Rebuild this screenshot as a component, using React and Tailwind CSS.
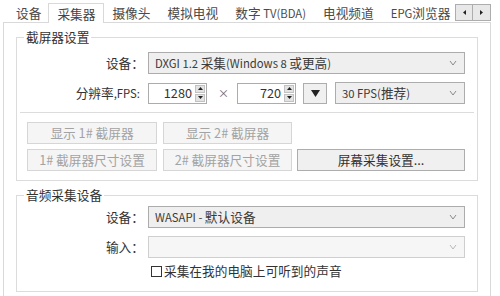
import React from "react";

function Mixed({ text }) {
  const parts = String(text).split(/([\x20-\x7E]+)/);
  return parts.map((p, i) =>
    /[\x20-\x7E]/.test(p) ? (
      <span key={i} className="text-[11.3px]">
        {p}
      </span>
    ) : (
      <React.Fragment key={i}>{p}</React.Fragment>
    )
  );
}

function Chevron({ light }) {
  return (
    <svg width="8" height="6" viewBox="0 0 8 6" className="shrink-0">
      <polyline points="1,1 4,5 7,1" fill="none" stroke={light ? "#b8b8b8" : "#8a8a8a"} strokeWidth="1" />
    </svg>
  );
}

function Dropdown({ text, className = "", disabled }) {
  return (
    <div
      className={
        "flex items-center h-[22px] border pl-[6px] pr-[7px] " +
        (disabled ? "border-[#cfcfcf] bg-[#f6f6f6] " : "border-[#acacac] bg-[#efefef] ") +
        className
      }
    >
      <span className="flex-1 whitespace-nowrap text-[#3a3a3a]">
        <Mixed text={text} />
      </span>
      <Chevron light={disabled} />
    </div>
  );
}

function Spin({ value }) {
  return (
    <div className="flex items-center h-[21px] w-[59px] border border-[#acacac] bg-white pr-[1px]">
      <span className="flex-1 text-right pr-[3px] text-[#333]">{value}</span>
      <div className="flex flex-col gap-[1px] w-[10px]">
        <div className="h-[8px] bg-[#e3e3e3] border border-[#c2c2c2] flex items-center justify-center">
          <svg width="5" height="3" viewBox="0 0 5 3"><polygon points="2.5,0 5,3 0,3" fill="#222" /></svg>
        </div>
        <div className="h-[8px] bg-[#e3e3e3] border border-[#c2c2c2] flex items-center justify-center">
          <svg width="5" height="3" viewBox="0 0 5 3"><polygon points="0,0 5,0 2.5,3" fill="#222" /></svg>
        </div>
      </div>
    </div>
  );
}

function Btn({ children, w, disabled }) {
  return (
    <div
      className={
        "h-[22px] flex items-center justify-center border " +
        (disabled
          ? "border-[#d6d6d6] bg-[#f5f5f5] text-[#a3a3a3] "
          : "border-[#adadad] bg-[#f0f0f0] text-[#333] ") +
        w
      }
    >
      {children}
    </div>
  );
}

export default function App() {
  const tabs = ["设备", "采集器", "摄像头", "模拟电视", "数字 TV(BDA)", "电视频道", "EPG浏览器"];
  return (
    <div className="w-[500px] h-[296px] bg-white overflow-hidden text-[#333] text-[12.7px] leading-[16px] font-['Noto_Sans_CJK_SC',sans-serif]">
      {/* tab strip */}
      <div className="flex items-end h-[22px] relative z-10">
        <div className="flex items-end flex-1 min-w-0 pl-[8px] gap-[1px] h-full">
          {tabs.map((t, i) =>
            t === "采集器" ? (
              <div
                key={t}
                className="h-[20px] px-[8px] -ml-[2px] -mr-[1px] border border-b-0 border-[#d9d9d9] bg-white flex items-center shrink-0 text-[#444] translate-y-[1px]"
              >
                {t}
              </div>
            ) : (
              <div
                key={t}
                className={
                  "h-[18px] flex items-center shrink-0 whitespace-nowrap text-[#4a4a4a] " +
                  (i === tabs.length - 1 ? "pl-[8px] pr-0" : "px-[8px]")
                }
              >
                <span>
                  <Mixed text={t} />
                </span>
              </div>
            )
          )}
        </div>
        <div className="self-start mt-[4px] mr-[9px] flex h-[17px] border border-[#adadad] bg-[#e8e8e8] shrink-0">
          <div className="w-[17px] flex items-center justify-center border-r border-[#adadad]">
            <svg width="3" height="5" viewBox="0 0 3 5"><polygon points="3,0 3,5 0,2.5" fill="#222" /></svg>
          </div>
          <div className="w-[17px] flex items-center justify-center">
            <svg width="3" height="5" viewBox="0 0 3 5"><polygon points="0,0 0,5 3,2.5" fill="#222" /></svg>
          </div>
        </div>
      </div>

      {/* panel */}
      <div className="ml-[3px] w-[488px] h-[300px] border border-[#d9d9d9] bg-white">
        {/* group 1 */}
        <fieldset className="mx-[12px] mt-[6px] border border-[#dcdcdc] pb-[9px]">
          <legend className="ml-[7px] px-[2px] text-[#333]">截屏器设置</legend>
          <div className="flex items-center mt-[7px]">
            <div className="w-[127px] text-right">设备：</div>
            <Dropdown text="DXGI 1.2 采集(Windows 8 或更高)" className="ml-[4px] w-[317px]" />
          </div>
          <div className="flex items-center mt-[8px]">
            <div className="w-[127px] text-right pr-[4px]">
              <Mixed text="分辨率,FPS:" />
            </div>
            <div className="ml-[4px]">
              <Spin value="1280" />
            </div>
            <div className="w-[30px] text-center text-[#666] text-[11px] pl-[3px]">×</div>
            <Spin value="720" />
            <div className="ml-[7px] w-[24px] h-[21px] border border-[#adadad] bg-[#f0f0f0] flex items-center justify-center">
              <svg width="9" height="7" viewBox="0 0 9 7"><polygon points="0,0 9,0 4.5,7" fill="#222" /></svg>
            </div>
            <Dropdown text="30 FPS(推荐)" className="ml-[8px] w-[130px] h-[21px]" />
          </div>
          <div className="mx-[3px] mt-[8px] border-t border-[#dcdcdc]" />
          <div className="flex ml-[10px] mt-[9px] gap-[6px]">
            <Btn w="w-[130px]" disabled>显示 1# 截屏器</Btn>
            <Btn w="w-[129px]" disabled>显示 2# 截屏器</Btn>
          </div>
          <div className="flex ml-[10px] mt-[5px] gap-[6px]">
            <Btn w="w-[130px]" disabled>1# 截屏器尺寸设置</Btn>
            <Btn w="w-[129px]" disabled>2# 截屏器尺寸设置</Btn>
            <Btn w="w-[168px] -ml-[1px]">屏幕采集设置...</Btn>
          </div>
        </fieldset>

        {/* group 2 */}
        <fieldset className="mx-[12px] mt-[6px] border border-[#dcdcdc] pb-[12px]">
          <legend className="ml-[7px] px-[2px] text-[#333]">音频采集设备</legend>
          <div className="flex items-center mt-[3px]">
            <div className="w-[127px] text-right">设备：</div>
            <Dropdown text="WASAPI - 默认设备" className="ml-[4px] w-[317px]" />
          </div>
          <div className="flex items-center mt-[8px]">
            <div className="w-[127px] text-right">输入：</div>
            <Dropdown text="" className="ml-[4px] w-[317px]" disabled />
          </div>
          <div className="flex items-center mt-[5px] ml-[134px]">
            <div className="w-[11px] h-[11px] border border-[#333] bg-white mr-[2px]" />
            <span>采集在我的电脑上可听到的声音</span>
          </div>
        </fieldset>
      </div>
    </div>
  );
}
